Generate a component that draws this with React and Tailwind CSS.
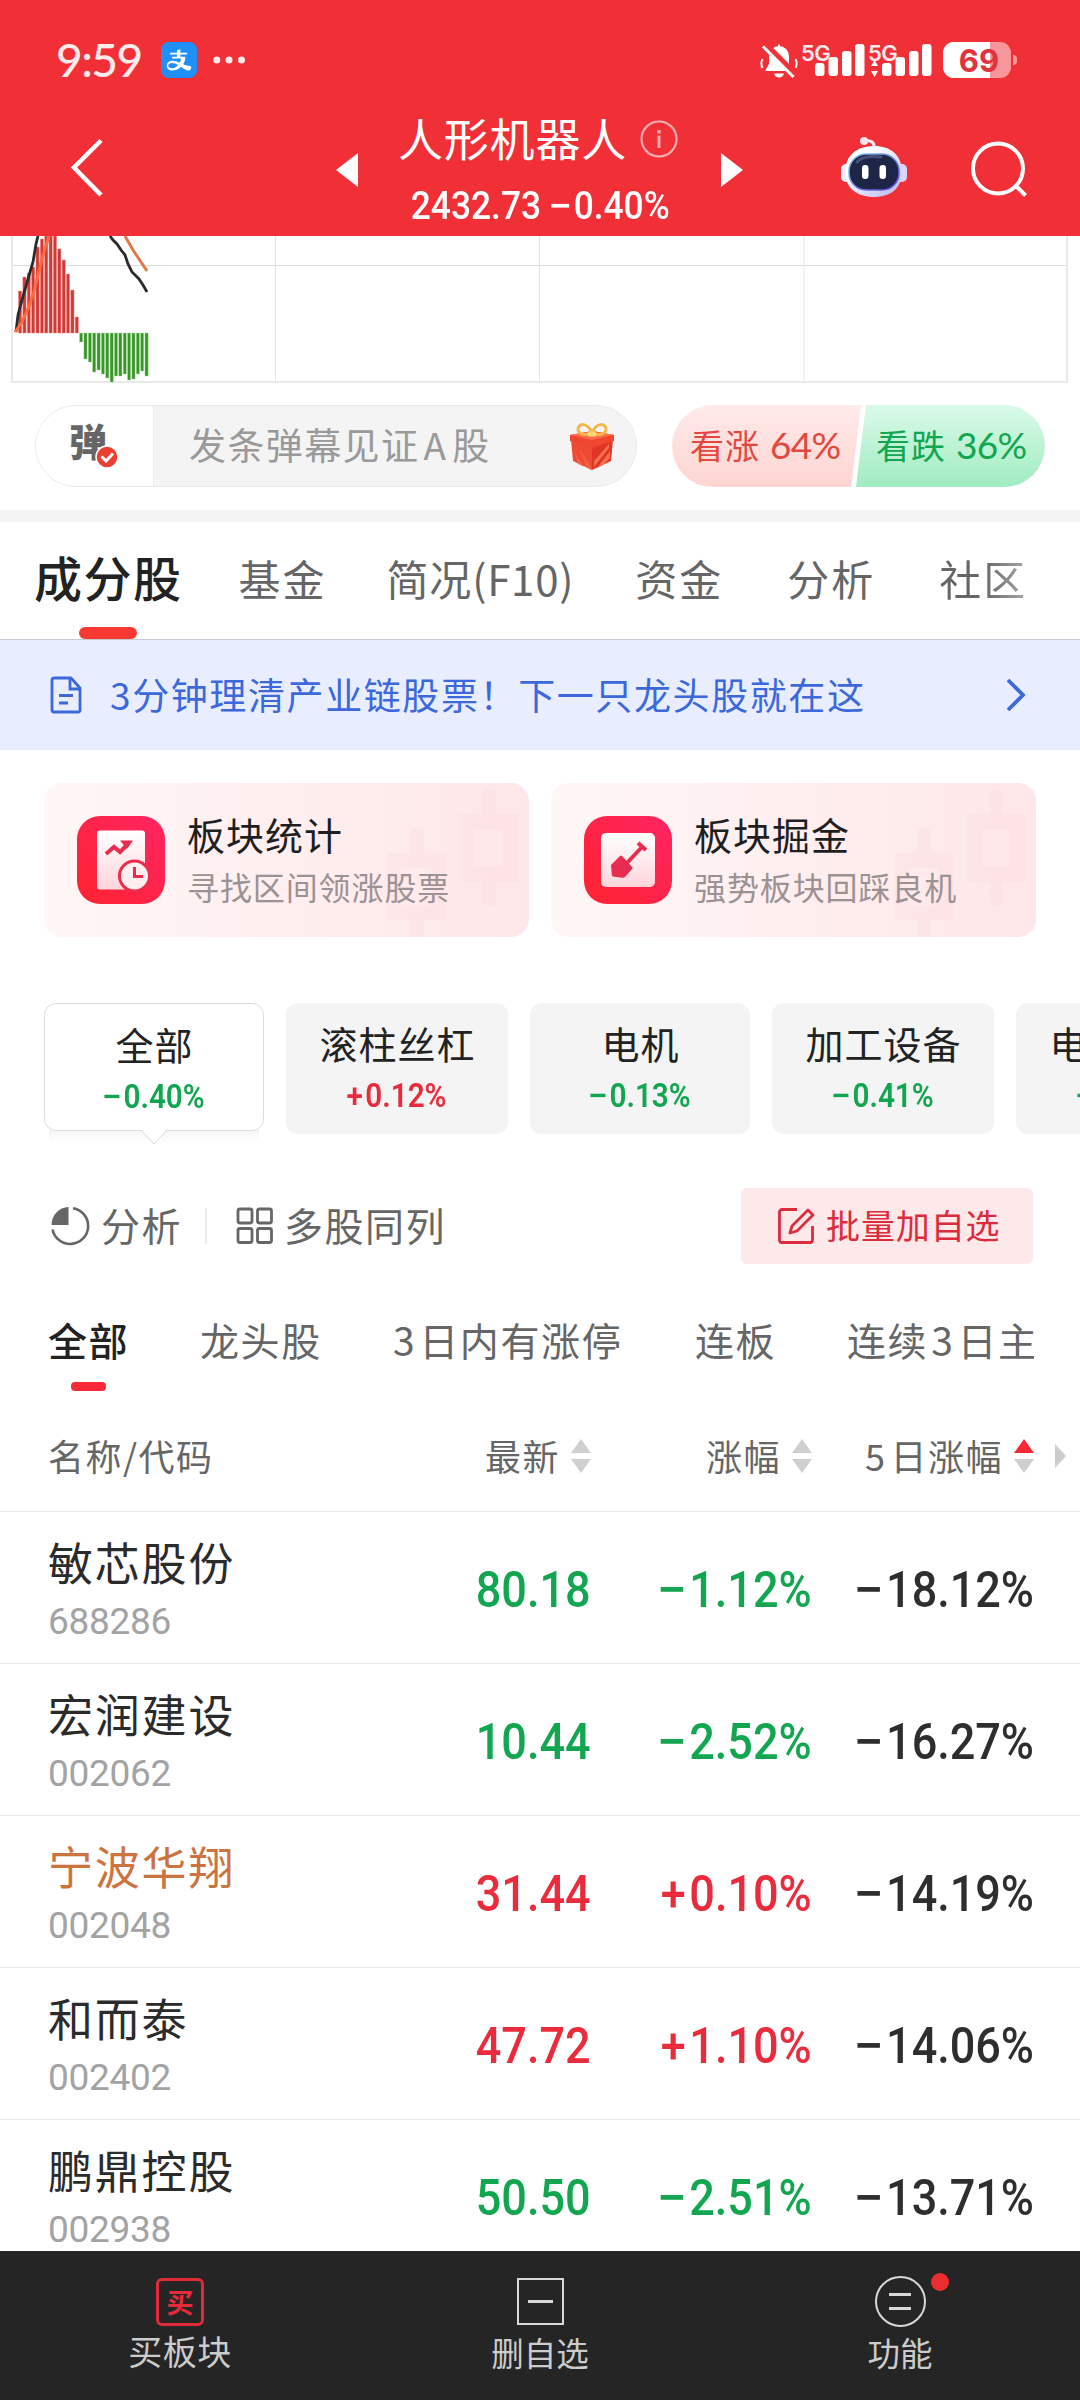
import { AiOutlineAlipay } from 'react-icons/ai'

const NUM = '[font-family:Roboto,sans-serif]'
const GREEN = 'text-[#12a650]'
const RED = 'text-[#ea2b3c]'

const TABS = [
  { label: '基金', cls: 'ml-[56px]' },
  { label: '简况(F10)', cls: 'ml-[60px] tracking-[0.8px]' },
  { label: '资金', cls: 'ml-[61px]' },
  { label: '分析', cls: 'ml-[64px]' },
]

const CHIPS = [
  { name: '滚柱丝杠', pct: '+0.12%', cls: 'w-[222px]' },
  { name: '电机', pct: '−0.13%', cls: 'w-[220px]' },
  { name: '加工设备', pct: '−0.41%', cls: 'w-[222px]' },
  { name: '电池设备', pct: '−0.52%', cls: 'w-[222px]' },
]

const STOCKS = [
  { name: '敏芯股份', code: '688286', price: '80.18', change: '−1.12%', five: '−18.12%' },
  { name: '宏润建设', code: '002062', price: '10.44', change: '−2.52%', five: '−16.27%' },
  { name: '宁波华翔', code: '002048', price: '31.44', change: '+0.10%', five: '−14.19%', held: true },
  { name: '和而泰', code: '002402', price: '47.72', change: '+1.10%', five: '−14.06%' },
  { name: '鹏鼎控股', code: '002938', price: '50.50', change: '−2.51%', five: '−13.71%' },
]

// Heights of the MACD histogram around the zero line (y = 97).
const MACD = [
  42, 56, 60, 66, 86, 94, 97, 97, 97, 84, 73, 59, 43, 16,
  -9, -26, -29, -39, -37, -41, -45, -49, -43, -43, -41, -47, -46, -41, -38, -43,
]

export default function App() {
  return (
    <div className="flex h-[2400px] w-[1080px] flex-col overflow-hidden bg-white text-[#222] [font-family:'Noto_Sans_CJK_SC','Noto_Sans',sans-serif]">
      <header className="h-[236px] shrink-0 bg-[#f12f37] text-white">
        <StatusBar />
        <TitleBar />
      </header>
      <main className="min-h-0 flex-1 overflow-hidden">
        <MacdChart />
        <Danmu />
        <div className="h-3 bg-[#f4f4f4]" />
        <Tabs />
        <Banner />
        <div className="flex gap-[22px] px-11 pt-[33px]">
          <FeatureCard title="板块统计" sub="寻找区间领涨股票" icon={<StatsIcon />} />
          <FeatureCard title="板块掘金" sub="强势板块回踩良机" icon={<ShovelIcon />} />
        </div>
        <Chips />
        <Tools />
        <Filters />
        <TableHead />
        {STOCKS.map((s) => (
          <StockRow key={s.code} {...s} />
        ))}
      </main>
      <BottomNav />
    </div>
  )
}

function StatusBar() {
  return (
    <div className="flex h-[120px] items-center pl-[56px]">
      <span className="w-[105px] text-[46px] leading-none font-medium tracking-[-1.5px] text-white/90 [font-family:Lato,sans-serif]">
        9:59
      </span>
      <span className="flex h-9 w-9 items-center justify-center rounded-[8px] bg-[#1f8ffb]">
        <AiOutlineAlipay size={28} />
      </span>
      <svg className="ml-4" width="34" height="36" viewBox="0 0 34 36" fill="#fff" fillOpacity="0.9">
        <circle cx="3.8" cy="18" r="3.5" />
        <circle cx="16" cy="18" r="3.5" />
        <circle cx="28.5" cy="18" r="3.5" />
      </svg>
      <svg className="ml-[513px]" width="38" height="38" viewBox="0 0 38 38" fill="none">
        <path d="M9 15a10 10 0 0 1 20 0v8l4 7H5l4-7z" fill="#fff" />
        <path d="M18 3.5h2v3h-2zM14 32.5h10c-1 3-3 4-5 4s-4-1-5-4z" fill="#fff" />
        <path d="M2.5 18c-1.5 3-1.5 6 0 9M35.5 18c1.5 3 1.5 6 0 9" stroke="#fff" strokeWidth="2" />
        <path d="M5 3 36 34" stroke="#f12f37" strokeWidth="6" />
        <path d="M3 5.5 33.5 36" stroke="#fff" strokeWidth="3" />
      </svg>
      <Signal className="ml-[3px]" />
      <Signal className="ml-[2px]" arrows />
      <div className="relative ml-[10px] flex h-9 w-[68px] items-center justify-center overflow-hidden rounded-[11px] bg-white/50">
        <div className="absolute inset-y-0 left-0 w-[47px] bg-white" />
        <span className="relative pl-1 text-[31px] leading-none font-bold text-[#e0333c] [font-family:Inter,sans-serif]">
          69
        </span>
      </div>
      <div className="ml-[2px] h-[10px] w-1 rounded-r-full bg-white/50" />
    </div>
  )
}

function Signal({ className, arrows }) {
  return (
    <div className={`relative h-9 w-[65px] ${className}`}>
      <span className="absolute -top-[2px] left-0 text-[22px] leading-[26px] font-semibold tracking-[-0.5px] text-white/90 [font-family:Inter,sans-serif]">
        5G
      </span>
      <svg width="65" height="36" viewBox="0 0 65 36" fill="#fff">
        <rect x="14" y="21" width="9.5" height="13" rx="3" />
        <rect x="27.5" y="15" width="9.5" height="19" rx="3" />
        <rect x="41" y="9" width="9.5" height="25" rx="3" />
        <rect x="54" y="2" width="9.5" height="32" rx="3" />
        {arrows && <path d="M6.5 18 10 24H3zM6.5 35 10 29H3z" />}
      </svg>
    </div>
  )
}

function TitleBar() {
  return (
    <div className="flex h-[116px] pl-[70px]">
      <svg className="mt-[18px]" width="34" height="60" viewBox="0 0 34 60" fill="none">
        <path d="M31 2.500 4 29.500 31 57" stroke="#fff" strokeWidth="4.500" />
      </svg>
      <svg className="mt-[32px] ml-[231px]" width="24" height="36" viewBox="0 0 24 36" fill="#fff">
        <path d="M1 18 23 1v34z" />
      </svg>
      <div className="ml-[22px] flex w-[318px] flex-col">
        <div className="ml-[17px] flex h-[38px] items-center">
          <span className="-mt-[4px] w-[230px] text-[45px] leading-none tracking-[0.8px] whitespace-nowrap">人形机器人</span>
          <svg className="ml-[12px]" width="38" height="38" viewBox="0 0 38 38" fill="none" stroke="#fff" strokeOpacity="0.6">
            <circle cx="19" cy="19" r="17.5" strokeWidth="2.2" />
            <path d="M19 15.500V28" strokeWidth="3" />
            <path d="M19 10v3.500" strokeWidth="3.500" />
          </svg>
        </div>
        <div className={`${NUM} mt-[29px] flex h-[38px] items-center justify-center text-[38px] leading-none font-medium whitespace-nowrap`}>
          <span className="scale-x-[0.93]">
            2432.73 <Signed value="−0.40%" />
          </span>
        </div>
      </div>
      <svg className="mt-[32px] ml-[21px]" width="24" height="36" viewBox="0 0 24 36" fill="#fff">
        <path d="M23 18 1 1v34z" />
      </svg>
      <Robot />
      <svg className="mt-[20px] ml-[60px]" width="64" height="60" viewBox="0 0 64 60" fill="none" stroke="#fff" strokeWidth="4">
        <circle cx="30" cy="28.5" r="25" />
        <path d="m48.5 46.5 9 9" />
      </svg>
    </div>
  )
}

// Number with a slightly wider sign, so plus and minus line up with each other.
function Signed({ value }) {
  const minus = value[0] === '−'
  return (
    <>
      <span className={minus ? 'mr-[0.11em] inline-block scale-x-[1.2]' : 'mr-[0.08em] inline-block'}>{value[0]}</span>
      {value.slice(1)}
    </>
  )
}

function Robot() {
  return (
    <svg className="mt-[16px] ml-[96px]" width="68" height="62" viewBox="0 0 68 62" fill="none">
      <defs>
        <linearGradient id="shell" x1="0" y1="0" x2="1" y2="1">
          <stop offset="0.3" stopColor="#fff" />
          <stop offset="1" stopColor="#b9b2ee" />
        </linearGradient>
        <linearGradient id="visorEdge" x1="0" y1="0" x2="1" y2="1">
          <stop offset="0" stopColor="#7fd0f5" />
          <stop offset="1" stopColor="#5d3fd6" />
        </linearGradient>
      </defs>
      <path d="M25 5c6-1 10 1 9 8" stroke="#f4e8f5" strokeWidth="3" />
      <circle cx="24" cy="5" r="4" fill="#fde4e8" />
      <rect x="1" y="28" width="12" height="18" rx="5" fill="#f1edff" />
      <rect x="55" y="28" width="12" height="18" rx="5" fill="#dcd4fa" />
      <path d="M34 10c17 0 27 9 28 25 0 17-11 26-28 26S5 52 5 35c1-16 12-25 29-25z" fill="url(#shell)" />
      <rect x="9" y="18" width="50" height="36" rx="17" fill="#1e2547" stroke="url(#visorEdge)" strokeWidth="1.5" />
      <path d="M17 26c5-6 16-6 24-5" stroke="#46507a" strokeWidth="3" strokeLinecap="round" />
      <rect x="22" y="29" width="6.5" height="14" rx="3.2" fill="#fff" />
      <rect x="39.5" y="29" width="6.5" height="14" rx="3.2" fill="#fff" />
    </svg>
  )
}

function MacdChart() {
  return (
    <svg className="block" width="1080" height="169" viewBox="0 0 1080 169" fill="none">
      <path d="M275.5 0v147M539.5 0v147M804 0v147" stroke="#e4e4e6" />
      <path d="M12 29.5h1055" stroke="#dcdcdc" />
      <path d="M12 0v146h1055V0" stroke="#e9e9e9" strokeWidth="2" />
      {MACD.map((h, i) => (
        <rect
          key={i}
          x={18.5 + i * 4.36}
          y={h > 0 ? 97 - h : 97}
          width="3.2"
          height={Math.abs(h)}
          fill={h > 0 ? '#cc3b38' : '#3a942b'}
          stroke={h > 0 ? '#f58a86' : '#a8e39b'}
          strokeWidth="0.5"
        />
      ))}
      <path
        d="M16 96 18 79 22 64 28 43 33 26 36 8 38 0M110 0 113 4 117 8 121 14 125 19 128 28 132 36 139 43 143 49 147 56"
        stroke="#2b2b2b"
        strokeWidth="2.8"
      />
      <path d="M15 96 22 86 28 73 33 59 38 39 43 19 49 0" stroke="#ff6a3c" strokeWidth="3" />
      <path d="M125 0 133 14 141 26 147 35" stroke="#e0784a" strokeWidth="3" />
    </svg>
  )
}

function Danmu() {
  return (
    <div className="flex h-[105px] pl-[35px]">
      <div className="flex h-[82px] w-[602px] overflow-hidden rounded-full border border-[#ebebeb] bg-[#f4f4f4]">
        <div className="relative w-[118px] border-r border-[#ebebeb] bg-white">
          <span className="absolute top-[15px] left-[33px] text-[38px] leading-none font-black text-[#666]">弹</span>
          <svg className="absolute top-[39px] left-[59px]" width="24" height="24" viewBox="0 0 24 24" fill="none">
            <circle cx="12" cy="12" r="11" fill="#ea3f33" stroke="#fff" strokeWidth="1.5" />
            <path d="m6.5 11.5 4.5 4.500 7-7.500" stroke="#fff" strokeWidth="3" />
          </svg>
        </div>
        <div className="flex flex-1 items-center pl-[35px]">
          <span className="-mt-[4px] w-[380px] text-[37px] leading-none tracking-[1.4px] whitespace-nowrap text-[#999]">
            发条弹幕见证<span className="mr-[5px] ml-[4px]">A</span>股
          </span>
          <Gift />
        </div>
      </div>
      <div className="relative ml-[35px] h-[82px] w-[373px] overflow-hidden rounded-full">
        <div className="absolute inset-y-0 left-0 w-[189px] bg-linear-to-b from-[#ffeaea] to-[#fdd5d1] [clip-path:polygon(0_0,100%_0,179px_100%,0_100%)]" />
        <div className="absolute inset-y-0 right-0 w-[189px] bg-linear-to-b from-[#dafae9] to-[#a0ecc1] [clip-path:polygon(10px_0,100%_0,100%_100%,0_100%)]" />
        <div className="relative flex h-full items-center pb-[3px] text-[34px] leading-none tracking-[1px] whitespace-nowrap">
          <span className="ml-[18px] w-[186px] text-[#e2483f]">
            看涨<span className="ml-[10px] text-[37px] tracking-[-0.7px] [font-family:Lato,sans-serif]">64%</span>
          </span>
          <span className="text-[#12a650]">
            看跌<span className="ml-[10px] text-[37px] tracking-[-0.7px] [font-family:Lato,sans-serif]">36%</span>
          </span>
        </div>
      </div>
    </div>
  )
}

function Gift() {
  return (
    <svg width="46" height="50" viewBox="0 0 46 50" fill="none">
      <path d="m2 18 21 6v25L4 40z" fill="#ee4a33" />
      <path d="m44 18-21 6v25l19-9z" fill="#df3426" />
      <path d="m28 47 13-17v7L34 44zM25 40l15-17v4L25 46z" fill="#f3704c" />
      <path d="m5 30 10 16-6-3zM10 27l12 19v3l-4-2z" fill="#f56a4b" fillOpacity="0.7" />
      <path d="M1 14 24 10l21 4v6l-22 7L1 20z" fill="#f0452f" />
      <path d="m1 14 22-4 22 4-22 5z" fill="#fb6a4a" />
      <path d="M23 12.500C15 15 9 13 9 8s9-8 14 4c5-12 14-9 14-4s-6 7-14 4.500z" stroke="#f3b548" strokeWidth="3" />
      <path d="M21 13h4" stroke="#ffd876" strokeWidth="5" strokeLinecap="round" />
    </svg>
  )
}

function Tabs() {
  return (
    <div className="relative flex h-[118px] border-b border-[#c5c9d2] pl-[34px] text-[42px] leading-none tracking-[2px] whitespace-nowrap text-[#666]">
      <span className="mt-[30px] text-[48px] leading-none font-medium tracking-[1.5px] text-[#222]">成分股</span>
      {TABS.map((t) => (
        <span key={t.label} className={`mt-[35px] ${t.cls}`}>
          {t.label}
        </span>
      ))}
      <span className="mt-[35px] ml-[64px] bg-linear-to-r from-[#666] from-50% to-[#aaa] bg-clip-text text-transparent">
        社区
      </span>
      <div className="absolute bottom-0 left-[79px] h-3 w-[58px] rounded-full bg-[#fa3a32]" />
    </div>
  )
}

function Banner() {
  return (
    <div className="flex h-[110px] items-center bg-[#e8eeff] pl-[50px] text-[#3d68dc]">
      <svg width="32" height="38" viewBox="0 0 32 38" fill="none" stroke="currentColor" strokeWidth="2.8">
        <path d="M4 2h17l9 10v22a2 2 0 0 1-2 2H4a2 2 0 0 1-2-2V4a2 2 0 0 1 2-2z" />
        <path d="M20 2v11h10M9 19.500h14M9 27h9" />
      </svg>
      <span className="-mt-[2px] ml-[28px] w-[895px] text-[37px] leading-none tracking-[1.6px] whitespace-nowrap">
        3分钟理清产业链股票！下一只龙头股就在这
      </span>
      <svg width="22" height="34" viewBox="0 0 22 34" fill="none" stroke="currentColor" strokeWidth="3.8">
        <path d="m3 2 15 15L3 32" />
      </svg>
    </div>
  )
}

function FeatureCard({ title, sub, icon }) {
  return (
    <div className="relative flex h-[154px] w-[485px] items-center overflow-hidden rounded-[18px] bg-linear-to-r from-[#fff6f6] to-[#fee7e8] pl-[33px]">
      <svg className="absolute right-0 bottom-0" width="150" height="154" viewBox="0 0 150 154">
        <path
          fill="#fddcdf"
          fillOpacity="0.4"
          fillRule="evenodd"
          d="M103 12q0-6 7-6t7 6v19h22v68h-22v18q0 6-7 6t-7-6V99H81V31h22zM96 47v36h28V47z"
        />
        <path
          fill="#fddcdf"
          fillOpacity="0.3"
          fillRule="evenodd"
          d="M31 50q0-6 7-6t7 6v20h22v67H45v17H31v-17H8V70h23zM22 85v37h30V85z"
        />
      </svg>
      {icon}
      <div className="relative -mt-[3px] ml-[22px] whitespace-nowrap">
        <div className="text-[38px] leading-none tracking-[1px] text-[#1f1f1f]">{title}</div>
        <div className="mt-[17px] text-[32px] leading-none tracking-[0.9px] text-[#9c9293]">{sub}</div>
      </div>
    </div>
  )
}

function IconTile({ children }) {
  return (
    <svg className="relative" width="88" height="88" viewBox="0 0 88 88" fill="none">
      <defs>
        <linearGradient id="tile" x1="0" y1="1" x2="1" y2="0">
          <stop stopColor="#ff2330" />
          <stop offset="1" stopColor="#ff2562" />
        </linearGradient>
        <linearGradient id="paper" x1="0" y1="0" x2="0" y2="1">
          <stop stopColor="#fff" />
          <stop offset="1" stopColor="#ffd5dc" />
        </linearGradient>
      </defs>
      <rect width="88" height="88" rx="23" fill="url(#tile)" />
      {children}
    </svg>
  )
}

function StatsIcon() {
  return (
    <IconTile>
      <rect x="20" y="14.5" width="48" height="59" rx="3" fill="url(#paper)" />
      <path d="m29 38 8-7 6 5 8-8" stroke="#e82b4e" strokeWidth="4" />
      <path d="M43 24.500h13L50 33z" fill="#e82b4e" />
      <circle cx="57.5" cy="60" r="15" fill="#ffeef0" stroke="#ed2c4c" strokeWidth="3" />
      <path d="M57.500 51v9.500H66" stroke="#e82b4e" strokeWidth="3" />
    </IconTile>
  )
}

function ShovelIcon() {
  return (
    <IconTile>
      <rect x="17" y="17" width="54" height="54" rx="5" fill="url(#paper)" />
      <path d="m42 48 16-17M54 27l8 7" stroke="#e82b4e" strokeWidth="4" />
      <path d="m27 49 9-9q1-1 2 0l10 11q1 1 0 2l-7 8q-1 1-3 .8L29 60.500q-1 0-1.200-2z" fill="#e82b4e" />
    </IconTile>
  )
}

function Chips() {
  return (
    <div className="flex gap-[22px] pt-[66px] pl-[44px]">
      <div className="relative h-[131px] w-[220px] shrink-0">
        <div className="absolute inset-x-[5px] top-[125px] h-[16px] bg-linear-to-b from-[#f5f5f5] to-white" />
        <div className="relative h-[128px] rounded-[12px] border border-[#dcdcdc] bg-white">
          <ChipText name="全部" pct="−0.40%" />
        </div>
        <svg className="absolute top-[126px] left-[97px]" width="26" height="16" viewBox="0 0 26 16">
          <path d="M0 0h26L13 15z" fill="#fff" />
          <path d="M0 1 13 15 26 1" fill="none" stroke="#d8d8d8" />
        </svg>
      </div>
      {CHIPS.map((c) => (
        <div key={c.name} className={`h-[131px] shrink-0 rounded-[12px] bg-[#f4f4f4] ${c.cls}`}>
          <ChipText {...c} />
        </div>
      ))}
    </div>
  )
}

function ChipText({ name, pct }) {
  return (
    <div className="flex flex-col items-center pt-[21px] whitespace-nowrap">
      <div className="pl-[1px] text-[38px] leading-none tracking-[1px]">{name}</div>
      <div
        className={`${NUM} mt-[17px] scale-x-[0.9] text-[33px] leading-none font-semibold ${pct[0] === '+' ? RED : GREEN}`}
      >
        <Signed value={pct} />
      </div>
    </div>
  )
}

function Tools() {
  return (
    <div className="mt-[54px] flex h-[76px] items-center pl-[50px] text-[39px] leading-none tracking-[1.5px] whitespace-nowrap text-[#666]">
      <svg width="40" height="40" viewBox="0 0 40 40" fill="none">
        <path d="M18.500 1v18h-17A18 18 0 0 1 18.500 1z" fill="#666" />
        <path d="M23 2.200A18 18 0 1 1 2.500 23.500" stroke="#666" strokeWidth="2.600" />
      </svg>
      <span className="-mt-[4px] ml-[11px]">分析</span>
      <div className="ml-[23px] h-9 w-[2px] bg-[#ececec]" />
      <svg className="ml-[29px]" width="38" height="38" viewBox="0 0 38 38" fill="none" stroke="#666" strokeWidth="2.8">
        <rect x="2" y="2" width="14" height="14" rx="2" />
        <rect x="21.5" y="2" width="14" height="14" rx="2" />
        <rect x="2" y="21.5" width="14" height="14" rx="2" />
        <rect x="21.5" y="21.5" width="14" height="14" rx="2" />
      </svg>
      <span className="-mt-[4px] ml-[10px]">多股同列</span>
      <div className="mr-[47px] ml-auto flex h-[76px] w-[292px] items-center rounded-[6px] bg-[#fde9ea] pl-[36px] text-[34px] tracking-[0.9px] text-[#dc2b3c]">
        <svg width="38" height="38" viewBox="0 0 38 38" fill="none" stroke="currentColor" strokeWidth="2.8">
          <path d="M20 2.500H5A2.500 2.500 0 0 0 2.500 5v28A2.500 2.500 0 0 0 5 35.500h28a2.500 2.500 0 0 0 2.500-2.500V19" />
          <path d="m31 3 5 5-16 16-7 2 2-7z" strokeLinejoin="round" />
        </svg>
        <span className="-mt-[3px] ml-[11px]">批量加自选</span>
      </div>
    </div>
  )
}

function Filters() {
  return (
    <div className="relative mr-[46px] ml-[48px] h-[148px] overflow-hidden pt-[56px]">
      <div className="flex text-[39px] leading-none tracking-[1.6px] whitespace-nowrap text-[#666]">
        <span className="w-[152px] shrink-0 font-medium text-[#222]">全部</span>
        <span className="w-[193px] shrink-0">龙头股</span>
        <span className="w-[302px] shrink-0">
          <span className="mr-[3px]">3</span>日内有涨停
        </span>
        <span className="w-[152px] shrink-0">连板</span>
        <span className="shrink-0">
          连续<span className="mx-[3px]">3</span>日主
        </span>
      </div>
      <div className="absolute top-[118px] left-[23px] h-[9px] w-[35px] rounded-[4px] bg-[#fb2838]" />
    </div>
  )
}

function Sorter({ up = '#cfcfcf' }) {
  return (
    <svg className="mt-[3px] ml-[11px]" width="20" height="34" viewBox="0 0 20 34">
      <path d="M10 0 20 14H0z" fill={up} />
      <path d="M10 34 20 20H0z" fill="#cfcfcf" />
    </svg>
  )
}

function TableHead() {
  return (
    <div className="flex h-[100px] items-center border-b border-[#e6e6e6] pb-[14px] pl-[48px] text-[36px] leading-none tracking-[1.5px] whitespace-nowrap text-[#666]">
      <span className="w-[300px]">名称/代码</span>
      <span className="flex w-[243px] items-center justify-end">
        最新
        <Sorter />
      </span>
      <span className="flex w-[221px] items-center justify-end">
        涨幅
        <Sorter />
      </span>
      <span className="flex w-[222px] items-center justify-end">
        <span className="mr-[4px]">5</span>日涨幅
        <Sorter up="#fb2838" />
      </span>
      <svg className="mt-[3px] ml-[21px]" width="11" height="24" viewBox="0 0 11 24">
        <path d="M0 0 11 12 0 24z" fill="#ccc" />
      </svg>
    </div>
  )
}

function StockRow({ name, code, price, change, five, held }) {
  const color = change[0] === '+' ? RED : GREEN
  return (
    <div className="flex h-[152px] border-b border-[#e6e6e6] pl-[48px] whitespace-nowrap">
      <div className="w-[300px] pt-[27px]">
        <div className={`text-[45px] leading-none tracking-[1.8px] ${held ? 'text-[#cc7440]' : 'text-[#2b2b2b]'}`}>
          {name}
        </div>
        <div className={`${NUM} mt-[19px] text-[37px] leading-none tracking-[-0.3px] text-[#a3a3a3]`}>{code}</div>
      </div>
      <div className={`${NUM} flex pt-[53px] text-[50px] leading-none font-medium`}>
        <span className={`flex w-[243px] justify-end ${color}`}>
          <span className="origin-right scale-x-[0.9]">{price}</span>
        </span>
        <span className={`flex w-[221px] justify-end ${color}`}>
          <span className="origin-right scale-x-[0.9]">
            <Signed value={change} />
          </span>
        </span>
        <span className="flex w-[222px] justify-end text-[#2e2e2e]">
          <span className="origin-right scale-x-[0.9]">
            <Signed value={five} />
          </span>
        </span>
      </div>
    </div>
  )
}

function BottomNav() {
  return (
    <nav className="flex h-[149px] shrink-0 bg-[#252525] text-[34px] leading-none whitespace-nowrap text-[#ccc]">
      <div className="flex w-[360px] flex-col items-center pt-[27px]">
        <span className="flex h-[48px] w-[48px] items-center justify-center rounded-[6px] border-3 border-[#e02a38] pb-[2px] text-[27px] leading-none font-bold text-[#e92a3a]">
          买
        </span>
        <span className="mt-[8px] tracking-[0.5px]">买板块</span>
      </div>
      <div className="flex w-[360px] flex-col items-center pt-[27px]">
        <span className="flex h-[47px] w-[47px] items-center justify-center border-[2.5px] border-[#d8d8d8]">
          <span className="h-[3px] w-[25px] bg-[#d8d8d8]" />
        </span>
        <span className="mt-[11px] text-[32.5px]">删自选</span>
      </div>
      <div className="relative flex w-[360px] flex-col items-center pt-[25px]">
        <span className="flex h-[51px] w-[51px] flex-col items-center justify-center gap-[11px] rounded-full border-[2.5px] border-[#d8d8d8]">
          <span className="h-[3px] w-[22px] bg-[#d8d8d8]" />
          <span className="h-[3px] w-[22px] bg-[#d8d8d8]" />
        </span>
        <span className="mt-[9px] text-[32.5px]">功能</span>
        <span className="absolute top-[22px] left-[211px] h-[18px] w-[18px] rounded-full bg-[#ea2e30]" />
      </div>
    </nav>
  )
}
